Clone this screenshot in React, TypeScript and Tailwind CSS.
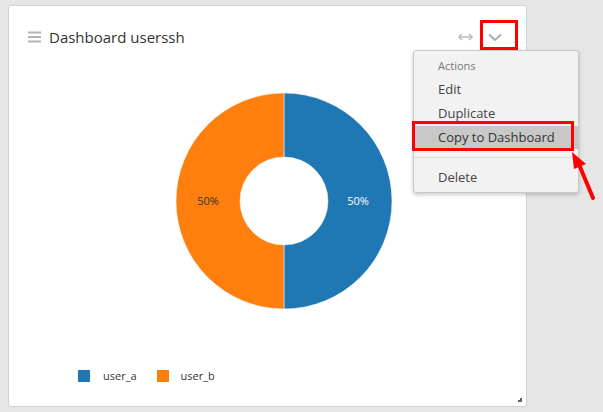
import React from 'react'

const FONT = { fontFamily: '"Open Sans", "Noto Sans", Arial, sans-serif' }

function Donut() {
  const cx = 275
  const cy = 150
  const r = 108
  const ri = 44
  const right = `M ${cx} ${cy - r} A ${r} ${r} 0 0 1 ${cx} ${cy + r} L ${cx} ${cy + ri} A ${ri} ${ri} 0 0 0 ${cx} ${cy - ri} Z`
  const left = `M ${cx} ${cy + r} A ${r} ${r} 0 0 1 ${cx} ${cy - r} L ${cx} ${cy - ri} A ${ri} ${ri} 0 0 0 ${cx} ${cy + ri} Z`
  return (
    <svg width="519" height="302" className="block">
      <path d={right} fill="#1f77b4" stroke="#fff" strokeWidth="0.5" />
      <path d={left} fill="#ff7f0e" stroke="#fff" strokeWidth="0.5" />
      <text x={cx + 74} y={cy + 4} textAnchor="middle" fontSize="11" fill="#fff" style={FONT}>50%</text>
      <text x={cx - 76} y={cy + 4} textAnchor="middle" fontSize="11" fill="#333" style={FONT}>50%</text>
    </svg>
  )
}

export default function App() {
  return (
    <div className="relative h-[412px] w-[603px] overflow-hidden bg-[#e6e6e6]" style={FONT}>
      <div className="relative ml-2 mt-[5px] h-[402px] w-[519px] rounded-[3px] border border-[#d0d0d0] bg-white">
        {/* header */}
        <div className="mt-[17px] flex h-[28px] items-center pl-[19px] pr-[10px]">
          <svg width="13" height="12" viewBox="0 0 13 12" className="mr-[8px]">
            <rect x="0" y="0.5" width="13" height="2" fill="#b5b5b5" />
            <rect x="0" y="5" width="13" height="2" fill="#b5b5b5" />
            <rect x="0" y="9.5" width="13" height="2" fill="#b5b5b5" />
          </svg>
          <span className="text-[15px] text-[#333]">Dashboard userssh</span>
          <div className="ml-auto flex items-center gap-[15px] pr-[14px]">
            <svg width="15" height="8" viewBox="0 0 15 8">
              <path d="M1 4 H14" stroke="#bdbdbd" strokeWidth="1.6" />
              <path d="M4 1 L1 4 L4 7 M11 1 L14 4 L11 7" stroke="#bdbdbd" strokeWidth="1.6" fill="none" />
            </svg>
            <svg width="14" height="9" viewBox="0 0 14 9">
              <path d="M1 1.5 L7 7 L13 1.5" stroke="#a8a8a8" strokeWidth="1.8" fill="none" />
            </svg>
          </div>
        </div>

        <Donut />

        {/* legend */}
        <div className="mt-[15px] flex items-center pl-[69px] text-[11px] text-[#333]">
          <span className="h-[12px] w-[12px] bg-[#1f77b4]" />
          <span className="ml-[13px]">user_a</span>
          <span className="ml-[20px] h-[12px] w-[12px] bg-[#ff7f0e]" />
          <span className="ml-[12px]">user_b</span>
        </div>

        {/* resize handle */}
        <div className="absolute bottom-[4px] right-[4px] h-[4px] w-[4px] border-b-2 border-r-2 border-[#666]" />
      </div>

      {/* chevron annotation */}
      <div className="absolute left-[480px] top-[20px] h-[30px] w-[38px] border-[3px] border-[#f00]" />

      {/* dropdown */}
      <div className="absolute left-[413px] top-[50px] w-[166px] rounded-[3px] border border-[#c8c8c8] bg-[#f2f2f2] pb-[3px] pt-[3px] shadow-[0_2px_4px_rgba(0,0,0,0.2)]">
        <div className="flex h-[24px] items-center pl-[24px] text-[11px] text-[#777]">Actions</div>
        <div className="flex h-[24px] items-center pl-[24px] text-[13px] text-[#444]">Edit</div>
        <div className="flex h-[24px] items-center pl-[24px] text-[13px] text-[#444]">Duplicate</div>
        <div className="flex h-[23px] items-center bg-[#c8c8c8] pl-[24px] text-[13px] text-[#333]">Copy to Dashboard</div>
        <div className="my-[8px] h-px bg-[#dcdcdc]" />
        <div className="flex h-[23px] items-center pl-[24px] text-[13px] text-[#444]">Delete</div>
      </div>

      {/* copy annotation */}
      <div className="absolute left-[412px] top-[121px] h-[30px] w-[162px] border-[3px] border-[#f00]" />

      {/* red arrow */}
      <svg className="absolute left-[560px] top-[145px]" width="43" height="60" viewBox="0 0 43 60">
        <path d="M33 53 L18 17" stroke="#f00" strokeWidth="4" strokeLinecap="round" />
        <path d="M12 7 L26 19 L14 24 Z" fill="#f00" />
      </svg>
    </div>
  )
}
